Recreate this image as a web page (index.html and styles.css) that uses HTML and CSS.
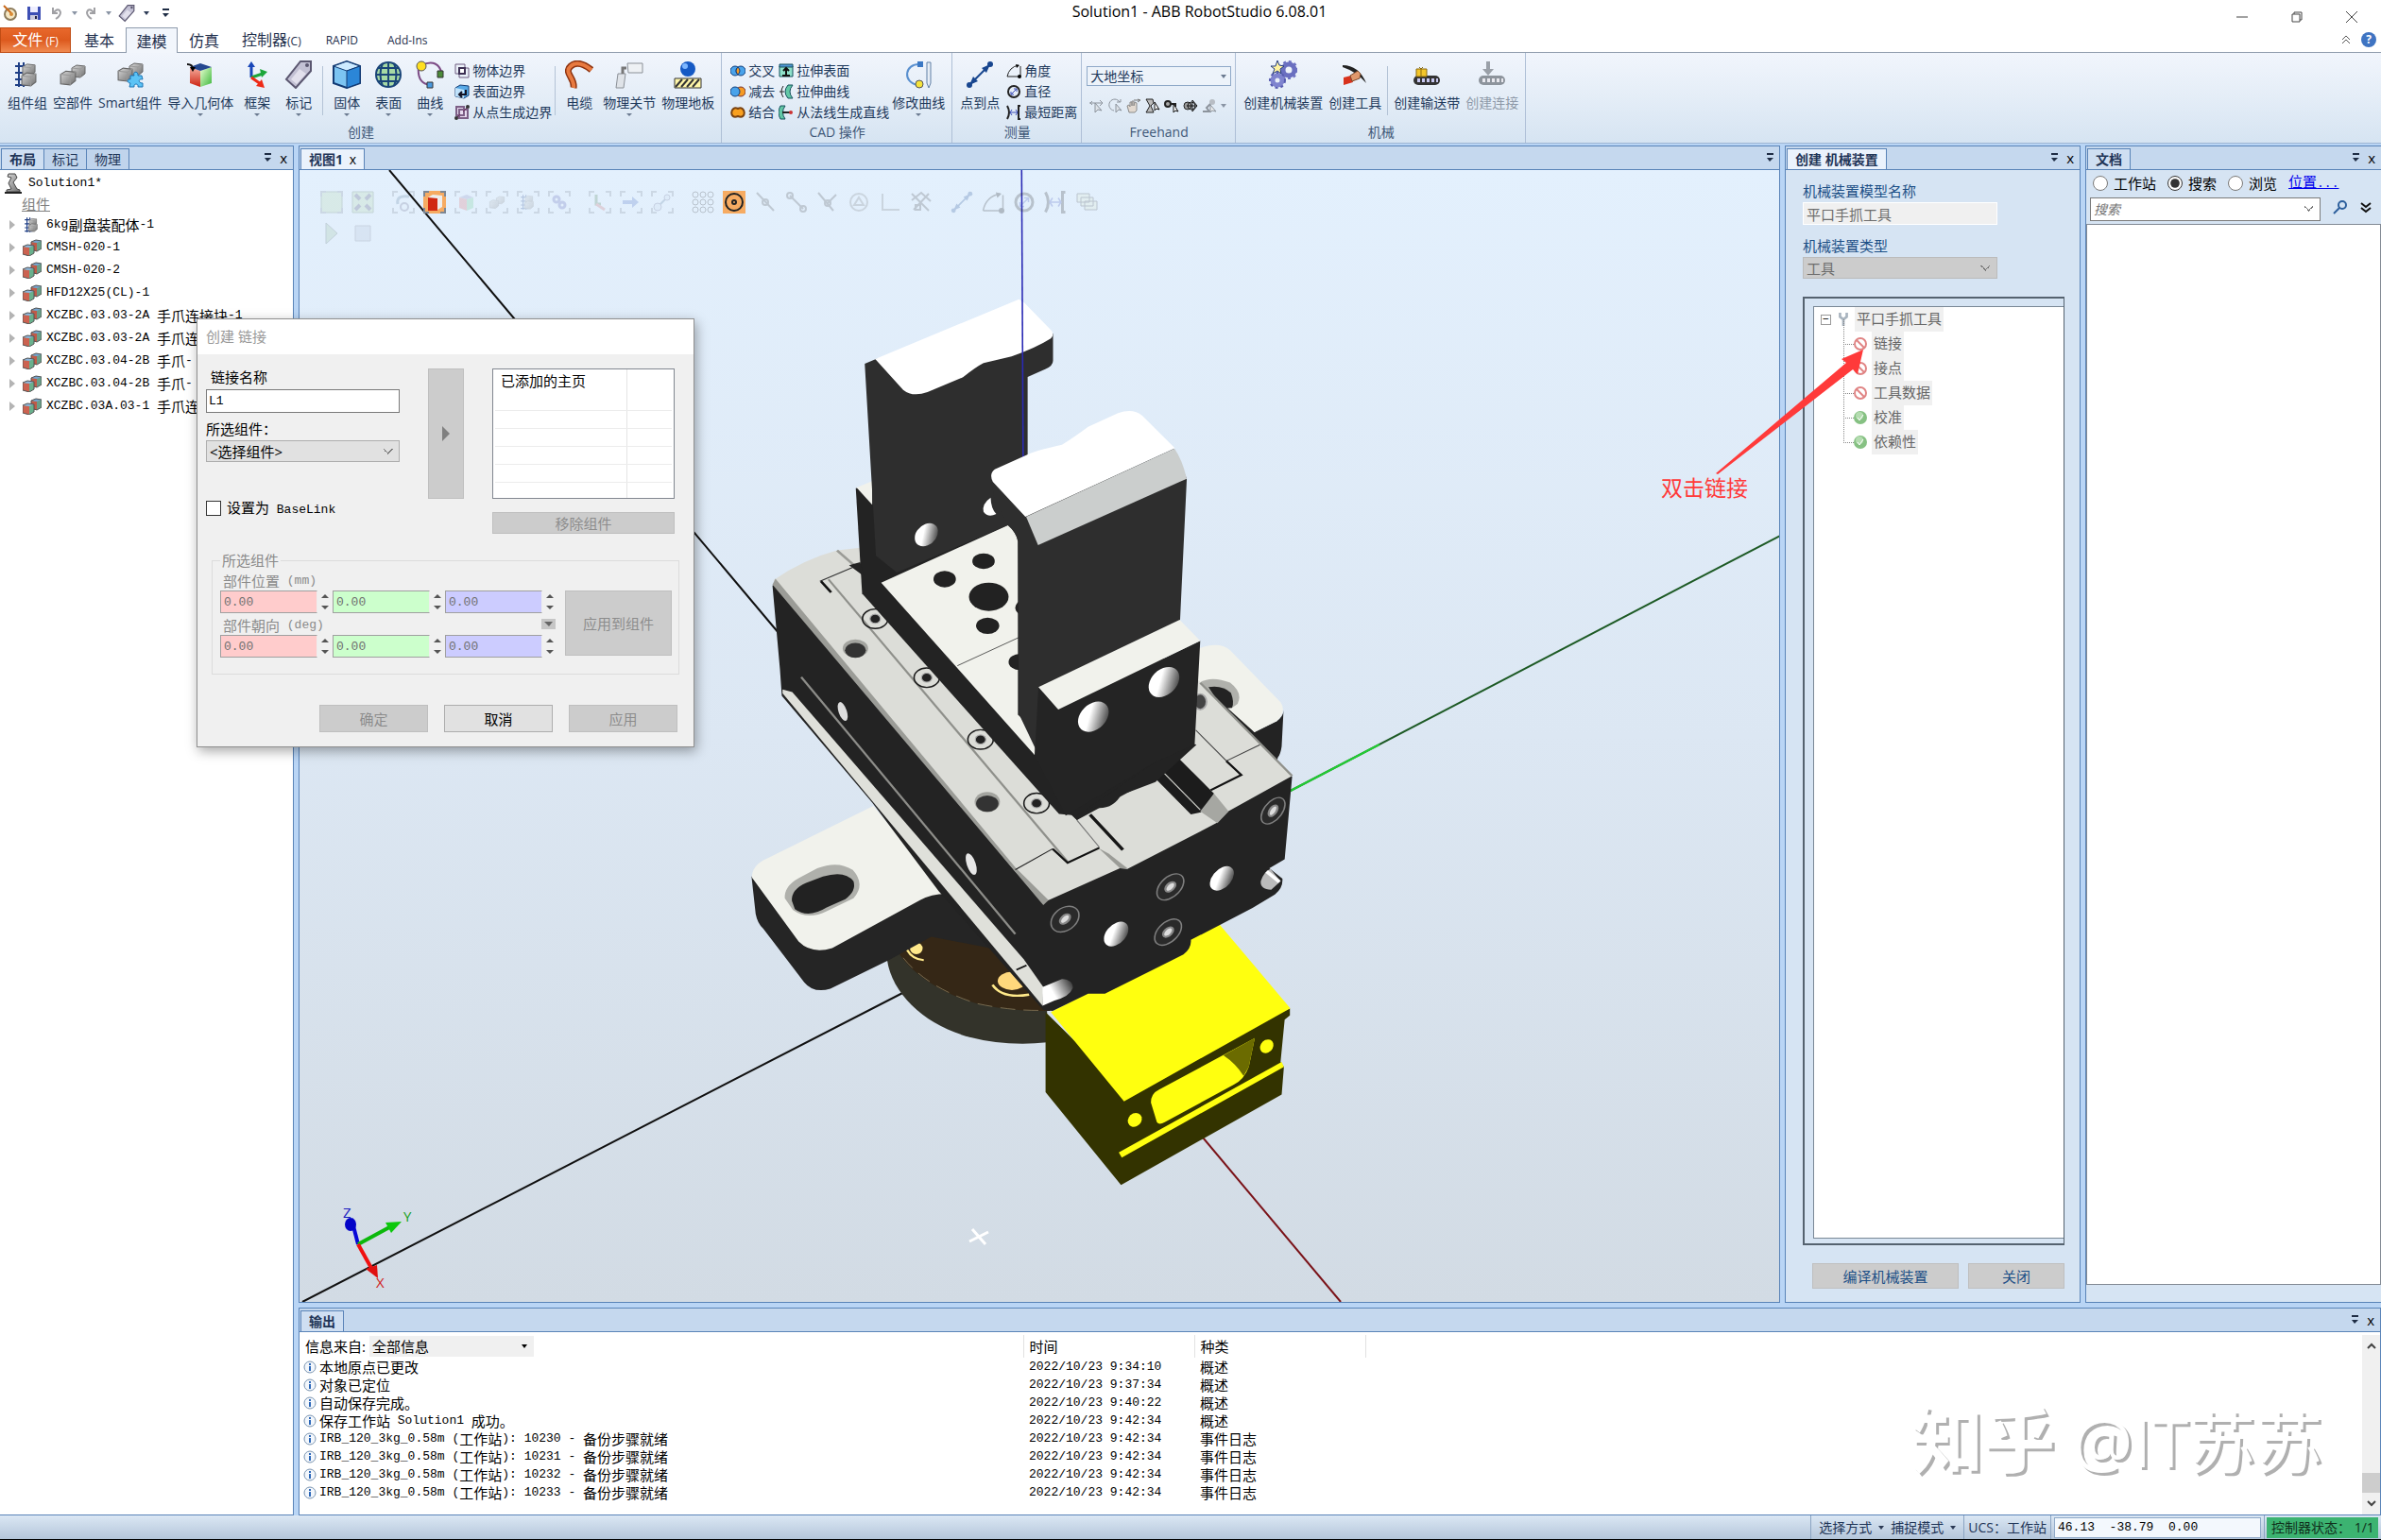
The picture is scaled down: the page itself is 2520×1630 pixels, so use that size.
FILE: index.html
```html
<!DOCTYPE html>
<html lang="zh-CN">
<head>
  <meta charset="UTF-8">
  <meta name="viewport" content="width=device-width, initial-scale=1.0">
  <title>Solution1 - ABB RobotStudio 6.08.01</title>
  <link rel="stylesheet" href="styles.css">
</head>
<body>
  <!-- 共用图标 -->
  <svg class="defs" aria-hidden="true">
    <defs>
      <linearGradient id="gGrey" x1="0" y1="0" x2="1" y2="1"><stop offset="0" stop-color="#d8d8d8"/><stop offset="1" stop-color="#6f6f6f"/></linearGradient>
      <linearGradient id="gRed" x1="0" y1="0" x2="0" y2="1"><stop offset="0" stop-color="#f7b0a0"/><stop offset="1" stop-color="#cc2211"/></linearGradient>
      <linearGradient id="gGreen" x1="0" y1="0" x2="1" y2="1"><stop offset="0" stop-color="#e8ffd0"/><stop offset="1" stop-color="#3db83d"/></linearGradient>
      <linearGradient id="gHole" x1="0" y1="0.7" x2="1" y2="0.2"><stop offset="0.35" stop-color="#fff"/><stop offset="1" stop-color="#3a3a3a"/></linearGradient>
    </defs>
    <symbol id="cube" viewBox="0 0 16 16"><path d="M1 5l5-3 9 1v8l-5 4-9-1z" fill="url(#gGrey)" stroke="#666"/><path d="M1 5l9 1 5-3M10 6v9" fill="none" stroke="#999"/></symbol>
    <symbol id="group" viewBox="0 0 30 30"><path d="M6 2v26M11 2v26M2 6h14M2 13h14M2 20h14M2 26h14" stroke="#1f3f86" stroke-width="2"/><use href="#cube" x="9" y="2" width="15" height="15"/><use href="#cube" x="8" y="11" width="17" height="17"/></symbol>
    <symbol id="part" viewBox="0 0 30 30"><use href="#cube" x="13" y="3" width="16" height="16"/><use href="#cube" x="1" y="9" width="18" height="18"/></symbol>
    <symbol id="smart" viewBox="0 0 30 30"><use href="#cube" x="13" y="1" width="16" height="16"/><use href="#cube" x="1" y="6" width="17" height="17"/><path d="M15 16h4c-2-5 5-5 4 0h4l1 4c-5-1-5 4 0 4v4h-5c1-4-5-4-4 0h-5l1-4c-4 0-4-5 0-4z" fill="#5cc3f5" stroke="#1c74b4"/></symbol>
    <symbol id="import" viewBox="0 0 30 30"><path d="M4 7l11 4v17L4 24z" fill="url(#gRed)"/><path d="M15 11l12-4v17l-12 4z" fill="url(#gGreen)"/><path d="M4 7l11-4 12 4-12 4z" fill="#24478f"/><path d="M1 4q6 0 6 5" fill="none" stroke="#111" stroke-width="2"/><path d="M4 7h6l-3 5z"/></symbol>
    <symbol id="frame" viewBox="0 0 30 30"><path d="M9 18V5" stroke="#1846b8" stroke-width="3"/><path d="M5 7l4-6 4 6z" fill="#1846b8"/><path d="M9 18l12-4" stroke="#1ca63a" stroke-width="3"/><path d="M18 9l8 3-6 6z" fill="#1ca63a"/><path d="M9 18l10 7" stroke="#ee2a16" stroke-width="3"/><path d="M20 20l3 9-9-2z" fill="#ee2a16"/></symbol>
    <symbol id="tag" viewBox="0 0 30 30"><path d="M17 1h11v10L12 29 2 20z" fill="#c3c1d4" stroke="#5b5770" stroke-width="2"/><path d="M16 9l7 5-10 11-6-5z" fill="#e2e0ec"/><circle cx="24" cy="5" r="2" fill="#5b5770"/></symbol>
    <symbol id="solid" viewBox="0 0 30 30"><path d="M1 6l14-5 14 5v18l-14 5-14-5z" fill="#7cc4f2" stroke="#123a74" stroke-width="2"/><path d="M1 6l14 5 14-5-14-5z" fill="#cdeaff" stroke="#123a74"/><path d="M15 11l14-5v18l-14 5z" fill="#2b86d8" stroke="#123a74"/></symbol>
    <symbol id="globe" viewBox="0 0 30 30"><circle cx="15" cy="15" r="13" fill="#a6d9a4" stroke="#1a4578" stroke-width="2"/><path d="M2 15h26M4 8h22M4 22h22M15 2v26M9 3q-5 12 0 24M21 3q5 12 0 24" fill="none" stroke="#1a4578" stroke-width="2"/></symbol>
    <symbol id="curve" viewBox="0 0 30 30"><path d="M3 6q-2 18 12 20M6 5q18-8 22 10" fill="none" stroke="#7d4c86" stroke-width="2"/><circle cx="6" cy="6" r="5" fill="#ffdf20" stroke="#555"/><path d="M23 11h6v7h-6z" fill="#4c8b38" stroke="#333"/><path d="M12 23h6v6h-6z" fill="#4a9ae0" stroke="#333"/></symbol>
    <symbol id="cable" viewBox="0 0 30 30"><path d="M9 29C11 19-2 13 6 6q8-7 22 4" fill="none" stroke="#8f3410" stroke-width="7"/><path d="M9 29C11 19-2 13 6 6q8-7 22 4" fill="none" stroke="#e87a40" stroke-width="4"/></symbol>
    <symbol id="joint" viewBox="0 0 30 30"><path d="M13 3h16v10H14z" fill="#eef1f4" stroke="#8b9097"/><path d="M3 14h8l-2 15H1z" fill="#dfe3e8" stroke="#8b9097"/><path d="M8 14V8h4" fill="none" stroke="#777" stroke-width="3"/></symbol>
    <symbol id="floor" viewBox="0 0 30 30"><circle cx="15" cy="9" r="8" fill="#1559c4"/><circle cx="12" cy="6" r="3" fill="#7cb6ff"/><path d="M1 19h28v10H1z" fill="#fff6a8" stroke="#333"/><path d="M2 28l7-8M8 28l7-8M14 28l7-8M20 28l7-8" stroke="#333" stroke-width="2"/></symbol>
    <symbol id="bound1" viewBox="0 0 16 16"><path d="M1 1h10v10H1zM5 5h10v10H5z" fill="none" stroke="#6c5a7e"/><path d="M5 5h6v6H5z" fill="#fff" stroke="#3c2f52" stroke-width="2"/></symbol>
    <symbol id="bound2" viewBox="0 0 16 16"><path d="M1 4l5-3 9 1v10l-5 3-9-2z" fill="#58a9e6" stroke="#173f75"/><path d="M1 4l9 2v9l-9-2z" fill="#bfe2fb"/><path d="M12 6v5H6M8 8l-3 3 3 3" fill="none" stroke="#112" stroke-width="2"/></symbol>
    <symbol id="bound3" viewBox="0 0 16 16"><path d="M2 2h8v9H2zM5 5h9v9H5z" fill="#e9dcf0" stroke="#7c5f86" stroke-width="2"/><path d="M2 14l4-4M9 7l5-5" stroke="#6b2a58"/><circle cx="2" cy="14" r="2" fill="#333"/><circle cx="14" cy="2" r="2" fill="#333"/></symbol>
    <symbol id="cross" viewBox="0 0 16 12"><circle cx="5" cy="6" r="5" fill="#4aa3ea" stroke="#123f7c"/><circle cx="11" cy="6" r="5" fill="#4aa3ea" stroke="#123f7c"/><path d="M8 2q4 4 0 8-4-4 0-8z" fill="#f59a23" stroke="#123f7c"/></symbol>
    <symbol id="minus" viewBox="0 0 16 12"><circle cx="11" cy="6" r="5" fill="#f59a23" stroke="#733"/><circle cx="5" cy="6" r="5" fill="#4aa3ea" stroke="#123f7c"/></symbol>
    <symbol id="union" viewBox="0 0 16 12"><path d="M8 2c8-4 10 12 0 8-10 4-8-12 0-8z" fill="#f9a01f" stroke="#7a4210" stroke-width="2"/></symbol>
    <symbol id="ext1" viewBox="0 0 16 16"><path d="M1 3h14v11H1z" fill="#8fe0c9" stroke="#14505c"/><path d="M1 1h14v3H1z" fill="#4f95d6" stroke="#14505c"/><path d="M8 13V6M5 8l3-3 3 3M4 13h8" fill="none" stroke="#111" stroke-width="2"/></symbol>
    <symbol id="ext2" viewBox="0 0 16 16"><path d="M10 1h5q-6 7 0 14h-5q-6-7 0-14z" fill="#62c7a5" stroke="#14505c"/><path d="M5 2q-4 6 0 12M1 8h5" fill="none" stroke="#222"/></symbol>
    <symbol id="ext3" viewBox="0 0 16 16"><path d="M2 1h5q-5 7 0 14H2q-4-7 0-14z" fill="#62c7a5" stroke="#14505c"/><path d="M4 8h8" stroke="#222" stroke-width="2"/><circle cx="13" cy="8" r="2" fill="#c33"/></symbol>
    <symbol id="modcurve" viewBox="0 0 30 30"><path d="M17 4C0 3-2 23 14 26" fill="none" stroke="#5a90cf" stroke-width="2"/><path d="M14 1h6v6h-6z" fill="#3b78c4"/><circle cx="16" cy="25" r="4" fill="#f5e33b" stroke="#555"/><path d="M24 2h4v22l-2 5-2-5z" fill="#e7eef6" stroke="#5f7ea5"/></symbol>
    <symbol id="p2p" viewBox="0 0 30 30"><path d="M4 26L26 4" stroke="#18468f" stroke-width="2"/><path d="M4 26l4-9 5 5zM26 4l-9 4 5 5z" fill="#18468f"/><circle cx="4" cy="26" r="3" fill="#18468f"/><circle cx="26" cy="4" r="3" fill="#18468f"/></symbol>
    <symbol id="angle" viewBox="0 0 16 16"><path d="M1 14h14V3M1 14Q3 4 13 2" fill="none" stroke="#222"/><path d="M10 1l4 1-3 3z"/><circle cx="14" cy="14" r="2"/></symbol>
    <symbol id="diam" viewBox="0 0 16 16"><circle cx="8" cy="8" r="6" fill="none" stroke="#222" stroke-width="2"/><path d="M5 11l6-6M11 8V5H8M5 8v3h3" fill="none" stroke="#3a4bb8"/></symbol>
    <symbol id="dist" viewBox="0 0 16 16"><path d="M1 1q4 7 0 14M15 1h-2v14h2" fill="none" stroke="#222" stroke-width="2"/><path d="M4 8h8M6 5L4 8l2 3M10 5l2 3-2 3" fill="none" stroke="#3a4bb8"/></symbol>
    <symbol id="move" viewBox="0 0 16 16"><path d="M1 5h14M12 2l3 3-3 3M4 3L2 5l2 2" fill="none" stroke="#8c939c"/><path d="M7 5v10l3-3 4 1z" fill="#dde2e8" stroke="#8c939c"/></symbol>
    <symbol id="rotate" viewBox="0 0 16 16"><path d="M13 4a6 6 0 1 0-6 9M10 4h4V1" fill="none" stroke="#8c939c"/><path d="M9 6v9l3-3 3 1z" fill="#dde2e8" stroke="#8c939c"/></symbol>
    <symbol id="hand" viewBox="0 0 16 16"><path d="M3 15L1 8l2-1 1 2V4h2v4V3h2v5l1-4 2 1v8l-2 2z" fill="#e2d9d0" stroke="#8a8a8a"/><path d="M8 2h6M12 1l3 1-3 2" fill="none" stroke="#777"/></symbol>
    <symbol id="jog1" viewBox="0 0 16 16"><path d="M1 1h7l1 4-3 3 3 7H1l4-7z" fill="#bbb" stroke="#222"/><path d="M10 4v9l2-2 3 1z" fill="#fff" stroke="#111"/></symbol>
    <symbol id="jog2" viewBox="0 0 16 16"><circle cx="4" cy="6" r="3" fill="#aaa" stroke="#222" stroke-width="2"/><path d="M6 6h6v3" fill="none" stroke="#222" stroke-width="2"/><path d="M10 6v9l2-2 3 1z" fill="#fff" stroke="#111"/></symbol>
    <symbol id="jog3" viewBox="0 0 16 16"><circle cx="5" cy="8" r="4" fill="#999" stroke="#222"/><circle cx="9" cy="8" r="4" fill="none" stroke="#222"/><path d="M10 2l5 6-5 6zM4 8h10" fill="none" stroke="#111"/></symbol>
    <symbol id="jog4" viewBox="0 0 16 16"><path d="M1 14h7L5 10l5-5" fill="none" stroke="#8c939c" stroke-width="2"/><circle cx="11" cy="4" r="3" fill="#b8bdc4"/><path d="M9 7v8l2-2 4 1z" fill="#eee" stroke="#8c939c"/></symbol>
    <symbol id="mech" viewBox="0 0 30 30"><circle cx="21" cy="10" r="6" fill="none" stroke="#6a6fc0" stroke-width="5"/><circle cx="21" cy="10" r="9" fill="none" stroke="#6a6fc0" stroke-width="2" stroke-dasharray="3 3"/><circle cx="9" cy="21" r="5" fill="none" stroke="#7f84cf" stroke-width="5"/><circle cx="9" cy="21" r="8" fill="none" stroke="#565bb0" stroke-width="2" stroke-dasharray="3 3"/><path d="M9 0l2 5 5 1-4 3 1 5-4-3-5 3 2-5-4-3h5z" fill="#fff3a0" stroke="#223a80"/></symbol>
    <symbol id="pick" viewBox="0 0 30 30"><path d="M2 5q17 0 25 19Q17 12 2 7z" fill="#222"/><path d="M3 18l8-2 2 7-10 3z" fill="#d8321c"/><path d="M10 16l8-5 3 3-1 5-8 3z" fill="#e0986c" stroke="#7a4a2c"/></symbol>
    <symbol id="conv" viewBox="0 0 30 30"><rect x="1" y="16" width="28" height="10" rx="5" fill="#333"/><path d="M5 21h22" stroke="#c8c8f0" stroke-width="4" stroke-dasharray="3 2"/><path d="M4 9h11v8H4z" fill="#f4c62a" stroke="#8b6a10"/><path d="M9 9v8M7 7l2 2 2-2" fill="none" stroke="#8b6a10"/></symbol>
    <symbol id="conn" viewBox="0 0 30 30"><rect x="1" y="16" width="28" height="10" rx="5" fill="#8d949c"/><path d="M5 21h22" stroke="#e8e8ee" stroke-width="4" stroke-dasharray="3 2"/><path d="M9 1h4v8h4l-6 7-6-7h4z" fill="#9aa0a8"/></symbol>
    <symbol id="robot" viewBox="0 0 18 22"><path d="M2 20h14v-2l-3-1-4-7 4-5-2-4H4L3 4l4 1-3 6 3 6-5 1z" fill="url(#gGrey)" stroke="#444"/><path d="M0 21h18" stroke="#222" stroke-width="2"/></symbol>
    <symbol id="comp" viewBox="0 0 20 18"><path d="M9 3l5-2 6 1v8l-5 3-6-1z" fill="#6a9f88"/><path d="M9 3l6 1v9l-6-1z" fill="#c05a48"/><path d="M9 3l5-2 6 1-5 2z" fill="#77a3d0"/><path d="M0 8l5-2 7 1v8l-5 3-7-2z" fill="#69b08c"/><path d="M0 8l7 1v9l-7-2z" fill="#cc6250"/><path d="M0 8l5-2 7 1-5 2z" fill="#8fb4dc"/><path d="M0 8l5-2 7 1v8l-5 3-7-2zM12 12l3 1 5-3V2l-6-1-5 2v3" fill="none" stroke="#555"/></symbol>
    <symbol id="pin" viewBox="0 0 8 10"><path d="M1 1h7" stroke="#1e2c44" stroke-width="2"/><path d="M1 5h7L4 9z" fill="#1e2c44"/></symbol>
    <symbol id="no" viewBox="0 0 16 16"><circle cx="8" cy="8" r="6" fill="#fff" stroke="#e08484" stroke-width="2"/><path d="M4 4l8 8" stroke="#e08484" stroke-width="2"/></symbol>
    <symbol id="ok" viewBox="0 0 16 16"><circle cx="8" cy="8" r="7" fill="#86c183"/><circle cx="7" cy="6" r="4" fill="#b4dcb0"/><path d="M5 8l2 3 4-6" fill="none" stroke="#fff"/></symbol>
    <symbol id="info" viewBox="0 0 14 14"><circle cx="7" cy="7" r="6" fill="#f3f7fc" stroke="#7a94b0"/><path d="M7 6v5M7 3v2" stroke="#2a66b8" stroke-width="2"/></symbol>
    <symbol id="corners" viewBox="0 0 24 24"><path d="M1 6V1h5M18 1h5v5M23 18v5h-5M6 23H1v-5" fill="none" stroke="#7d8794" stroke-width="2"/></symbol>
  </svg>

  <header class="titlebar">
    <div class="quick">
      <svg width="16" height="20" viewBox="0 0 16 20"><circle cx="8" cy="11" r="6" fill="#f4e7c4" stroke="#8d7c5c" stroke-width="2"/><path d="M1 2l8 8" stroke="#c8691b" stroke-width="2"/><circle cx="9" cy="11" r="2" fill="#d88b35"/></svg>
      <button aria-label="保存"><svg width="16" height="16" viewBox="0 0 16 16"><path d="M1 1h14v14H1z" fill="#3d4fb4"/><path d="M4 1h8v6H4z" fill="#eef"/><path d="M4 10h8v5H4z" fill="#ccd"/><path d="M9 11h2v3H9z" fill="#224"/></svg></button>
      <button aria-label="撤销"><svg width="14" height="16" viewBox="0 0 14 16"><path d="M3 2v6h5M3 8q6-7 8-1 0 4-5 7" fill="none" stroke="#a0a0a4" stroke-width="2"/></svg></button>
      <i class="tri"></i>
      <button aria-label="恢复"><svg width="14" height="16" viewBox="0 0 14 16"><path d="M11 2v6H6M11 8Q5 1 3 7q0 4 5 7" fill="none" stroke="#a0a0a4" stroke-width="2"/></svg></button>
      <i class="tri"></i>
      <button aria-label="标记"><svg width="18" height="20"><use href="#tag"/></svg></button>
      <i class="tri dark"></i>
      <svg class="more" width="8" height="10"><use href="#pin"/></svg>
    </div>
    <h1>Solution1 - ABB RobotStudio 6.08.01</h1>
    <div class="winbtns">
      <button aria-label="最小化"><svg width="14" height="14"><path d="M1 7h12" stroke="#444"/></svg></button>
      <button aria-label="还原"><svg width="14" height="14" fill="none" stroke="#444"><path d="M2 4h8v8H2zM4 4V2h8v8h-2"/></svg></button>
      <button aria-label="关闭"><svg width="14" height="14" stroke="#444"><path d="M1 1l12 12M13 1L1 13"/></svg></button>
    </div>
  </header>

  <nav class="tabs">
    <button class="tab file">文件<small> (F)</small></button>
    <button class="tab">基本</button>
    <button class="tab active">建模</button>
    <button class="tab">仿真</button>
    <button class="tab">控制器<small>(C)</small></button>
    <button class="tab latin">RAPID</button>
    <button class="tab latin">Add-Ins</button>
    <div class="help">
      <svg width="10" height="10" viewBox="0 0 10 10"><path d="M1 5l4-4 4 4M1 9l4-4 4 4" fill="none" stroke="#555"/></svg>
      <button aria-label="帮助">?</button>
    </div>
  </nav>

  <section class="ribbon">
    <div class="rgroup">
      <div class="tools">
        <button class="big"><svg><use href="#group"/></svg>组件组</button>
        <button class="big"><svg><use href="#part"/></svg>空部件</button>
        <button class="big"><svg><use href="#smart"/></svg>Smart组件</button>
        <button class="big drop"><svg><use href="#import"/></svg>导入几何体</button>
        <button class="big drop"><svg><use href="#frame"/></svg>框架</button>
        <button class="big drop"><svg><use href="#tag"/></svg>标记</button>
        <span class="sep"></span>
        <button class="big drop"><svg><use href="#solid"/></svg>固体</button>
        <button class="big drop"><svg><use href="#globe"/></svg>表面</button>
        <button class="big drop"><svg><use href="#curve"/></svg>曲线</button>
        <div class="smalls">
          <button><svg><use href="#bound1"/></svg>物体边界</button>
          <button><svg><use href="#bound2"/></svg>表面边界</button>
          <button><svg><use href="#bound3"/></svg>从点生成边界</button>
        </div>
        <span class="sep"></span>
        <button class="big"><svg><use href="#cable"/></svg>电缆</button>
        <button class="big drop"><svg><use href="#joint"/></svg>物理关节</button>
        <button class="big"><svg><use href="#floor"/></svg>物理地板</button>
      </div>
      <p>创建</p>
    </div>
    <div class="rgroup">
      <div class="tools">
        <div class="smalls">
          <button><svg><use href="#cross"/></svg>交叉</button>
          <button><svg><use href="#minus"/></svg>减去</button>
          <button><svg><use href="#union"/></svg>结合</button>
        </div>
        <div class="smalls">
          <button><svg><use href="#ext1"/></svg>拉伸表面</button>
          <button><svg><use href="#ext2"/></svg>拉伸曲线</button>
          <button><svg><use href="#ext3"/></svg>从法线生成直线</button>
        </div>
        <button class="big drop"><svg><use href="#modcurve"/></svg>修改曲线</button>
      </div>
      <p>CAD 操作</p>
    </div>
    <div class="rgroup">
      <div class="tools">
        <button class="big"><svg><use href="#p2p"/></svg>点到点</button>
        <div class="smalls">
          <button><svg><use href="#angle"/></svg>角度</button>
          <button><svg><use href="#diam"/></svg>直径</button>
          <button><svg><use href="#dist"/></svg>最短距离</button>
        </div>
      </div>
      <p>测量</p>
    </div>
    <div class="rgroup">
      <div class="freehand">
        <select aria-label="坐标系"><option>大地坐标</option></select>
        <div class="jogs">
          <button aria-label="移动"><svg><use href="#move"/></svg></button>
          <button aria-label="旋转"><svg><use href="#rotate"/></svg></button>
          <button aria-label="拖曳"><svg><use href="#hand"/></svg></button>
          <button aria-label="手动关节"><svg><use href="#jog1"/></svg></button>
          <button aria-label="手动线性"><svg><use href="#jog2"/></svg></button>
          <button aria-label="手动重定位"><svg><use href="#jog3"/></svg></button>
          <button aria-label="多个机器人"><svg><use href="#jog4"/></svg></button>
          <i class="tri"></i>
        </div>
      </div>
      <p>Freehand</p>
    </div>
    <div class="rgroup">
      <div class="tools">
        <button class="big"><svg><use href="#mech"/></svg>创建机械装置</button>
        <button class="big"><svg><use href="#pick"/></svg>创建工具</button>
        <span class="sep"></span>
        <button class="big"><svg><use href="#conv"/></svg>创建输送带</button>
        <button class="big off" disabled><svg><use href="#conn"/></svg>创建连接</button>
      </div>
      <p>机械</p>
    </div>
  </section>

  <main class="workspace">
    <aside class="panel left">
      <div class="phead">
        <button class="ptab on">布局</button><button class="ptab">标记</button><button class="ptab">物理</button>
        <span class="pctl"><svg width="8" height="10"><use href="#pin"/></svg><button aria-label="关闭">x</button></span>
      </div>
      <ul class="tree">
        <li class="root"><svg><use href="#robot"/></svg><span class="mono">Solution1*</span></li>
        <li class="cat">组件</li>
        <li><i></i><svg><use href="#group"/></svg><span class="mono">6kg</span>副盘装配体<span class="mono">-1</span></li>
        <li><i></i><svg><use href="#comp"/></svg><span class="mono">CMSH-020-1</span></li>
        <li><i></i><svg><use href="#comp"/></svg><span class="mono">CMSH-020-2</span></li>
        <li><i></i><svg><use href="#comp"/></svg><span class="mono">HFD12X25(CL)-1</span></li>
        <li><i></i><svg><use href="#comp"/></svg><span class="mono">XCZBC.03.03-2A </span>手爪连接块<span class="mono">-1</span></li>
        <li><i></i><svg><use href="#comp"/></svg><span class="mono">XCZBC.03.03-2A </span>手爪连</li>
        <li><i></i><svg><use href="#comp"/></svg><span class="mono">XCZBC.03.04-2B </span>手爪<span class="mono">-</span></li>
        <li><i></i><svg><use href="#comp"/></svg><span class="mono">XCZBC.03.04-2B </span>手爪<span class="mono">-</span></li>
        <li><i></i><svg><use href="#comp"/></svg><span class="mono">XCZBC.03A.03-1 </span>手爪连</li>
      </ul>
    </aside>

    <section class="panel view">
      <div class="phead">
        <button class="ptab on light">视图1 <b>x</b></button>
        <span class="pctl"><svg width="8" height="10"><use href="#pin"/></svg></span>
      </div>
      <div class="canvas">
        <svg class="scene" viewBox="317 180 1566 1198" preserveAspectRatio="xMidYMid slice" aria-label="夹爪三维视图">
          <!-- 坐标轴线 -->
          <path d="M412 180L830 677M320 1378L965 1046" stroke="#111" stroke-width="2" fill="none"/>
          <path d="M1360 840L1884 567" stroke="#1d5a25" stroke-width="2"/>
          <path d="M1360 840L1460 788" stroke="#22cc33" stroke-width="2"/>
          <path d="M1268 1198L1419 1378" stroke="#7a1218" stroke-width="2"/>

          <!-- 右侧安装耳 -->
          <g transform="translate(780 300) scale(.3954 .3333)">
            <path d="M1220 1200L1385 1425L1445 1390Q1463 1375 1463 1355L1458 1470Q1455 1495 1448 1505L1440 1540L1300 1500Z" fill="#232323"/>
            <path d="M1235 1160Q1290 1135 1320 1165L1455 1330Q1472 1360 1445 1390L1385 1425L1230 1260Z" fill="#f1f2ec"/>
            <path d="M1238 1268Q1270 1245 1320 1268Q1355 1300 1340 1335L1325 1348L1230 1300Z" fill="#b0b1ac"/>
            <path d="M1262 1282Q1300 1275 1322 1300Q1332 1330 1325 1348L1300 1350Z" fill="#232323"/>
          </g>

          <g transform="translate(780 740) scale(.3954 .3444)">
            <!-- 法兰盘 -->
            <path d="M400 780C405 900 500 1000 620 1038Q720 1068 830 1055V880L560 690Z" fill="#33332a"/>
            <path d="M432 778C470 850 560 910 640 935Q740 962 838 958V880L640 715L540 715Z" fill="#352716"/>
            <path d="M445 795C490 860 560 905 640 935Q740 960 828 956" fill="none" stroke="#8d8060" stroke-width="2" stroke-dasharray="40 22"/>
            <ellipse cx="480" cy="766" rx="17" ry="18" fill="#ffe98a"/>
            <path d="M455 770Q470 800 500 802" fill="none" stroke="#ffe98a" stroke-width="6"/>
            <ellipse cx="736" cy="866" rx="38" ry="28" fill="#ffd87c"/>
            <path d="M684 878Q710 922 782 908" fill="none" stroke="#ffe98a" stroke-width="7"/>
            <!-- 左侧安装耳 -->
            <path d="M39 545L50 660Q55 690 70 705L180 870Q205 905 250 890L410 800L520 730L700 770L640 600L555 590Z" fill="#252525"/>
            <path d="M40 548Q40 510 80 490L365 328L560 598Q520 598 490 618L255 765Q200 785 165 745Z" fill="#f1f2ec"/>
            <path d="M128 612Q126 575 165 550L215 520Q270 495 310 525Q345 570 312 612L240 652Q190 680 150 648Z" fill="#afb0ab"/>
            <path d="M147 620Q145 585 185 565L230 545Q290 525 312 560Q320 590 290 615L240 640Q190 675 155 645Z" fill="#222"/>
            <!-- 黄色底座 -->
            <path d="M826 962L1036 1200L1480 950V972L1466 985L1455 1115L1464 1130L1458 1215L1028 1493L826 1208Z" fill="#333300"/>
            <path d="M840 962L945 900L1290 690L1481 950L1036 1236Z" fill="#ffff0f"/>
            <path d="M1022 1393L1458 1115L1464 1130L1030 1409Z" fill="#ffff0f"/>
            <path d="M1108 1240Q1108 1212 1130 1200L1386 1042L1370 1130Q1358 1168 1330 1185L1145 1300Q1130 1310 1124 1300Z" fill="#ffff0f"/>
            <path d="M1302 1095L1386 1042L1370 1130L1356 1158Q1335 1120 1302 1095Z" fill="#6b6b00"/>
            <ellipse cx="1065" cy="1293" rx="18" ry="22" transform="rotate(25 1065 1293)" fill="#ffff0f"/>
            <ellipse cx="1418" cy="1067" rx="17" ry="22" transform="rotate(25 1418 1067)" fill="#ffff0f"/>

            <!-- 气缸本体 -->
            <path d="M95-349L115-92L120-10L362 318L540 590L820 955L845 958L940 905L985 905L1195 785Q1217 765 1215 740L1380 642L1440 600Q1462 580 1460 552L1425 520L1466 492L1486 238L1228-58L780-250L268-440Z" fill="#232323"/>
            <path d="M122-30L148-22L768 800L820 885L818 942L122-18Z" fill="#dfe0da"/>
            <path d="M818 885L870 860Q900 862 899 888Q890 915 850 926L818 942Z" fill="url(#gHole)"/>
            <path d="M748 832L775 818" stroke="#111" stroke-width="5"/>
            <path d="M172-68L745 722" stroke="#8d8d89" stroke-width="6"/>
            <ellipse cx="283" cy="38" rx="11" ry="30" transform="rotate(-16 283 38)" fill="#ddd"/>
            <ellipse cx="627" cy="507" rx="12" ry="34" transform="rotate(-16 627 507)" fill="#e6e6e6"/>
            <path d="M98-366Q180-430 268-457L330-465L345-320L885 345L910 372L945 350L1130 235L1235-58L1486 236L1315 345L1285 380L1045 522L1025 520L830 620L745 530Z" fill="#dcddd8"/>
            <path d="M95-352L103-370L746 518L834 618L820 633Z" fill="#9b9c97"/>
            <path d="M268-457L310-415L330-400" stroke="#9b9c97" stroke-width="7" fill="none"/>
            <path d="M245-368L885 500" stroke="#8f908b" stroke-width="6"/>
            <path d="M222-362L310-405" stroke="#333" stroke-width="3"/>
            <path d="M225-362L252-328" stroke="#111" stroke-width="7"/>
            <path d="M745 524L845 460" stroke="#222" stroke-width="3"/>
            <path d="M845 460L885 503L970 457" stroke="#111" stroke-width="6" fill="none"/>
            <path d="M968 458L1025 520L1045 520L995 475Z" fill="#9b9c97"/>
            <path d="M910 372L970 455" stroke="#777" stroke-width="3"/>
            <path d="M945 355L1033 463" stroke="#161616" stroke-width="9"/>
            <path d="M1118 195L1172 170L1277 290L1242 348L1215 354L1125 250Z" fill="#1c1c1c"/>
            <path d="M1118 198L1240 340" stroke="#cfd0ca" stroke-width="3"/>
            <path d="M1277 290L1316 345L1286 381L1240 345Z" fill="#a6a7a2"/>
            <path d="M1228 95L1310 190L1400 140" stroke="#444" stroke-width="3" fill="none"/>
            <path d="M1310 190L1350 233L1268 280" stroke="#111" stroke-width="6" fill="none"/>
            <path d="M1240-50L1486 236" stroke="#8f908b" stroke-width="6"/>
            <ellipse cx="1240" cy="8" rx="17" ry="24" fill="#444" stroke="#aaa" stroke-width="5"/>
            <path d="M860 345L885 342L910 372L950 332Q1005 345 1030 290L1050 285L1120 255L1230 140L1100 100L800 180Z" fill="#232323"/>
            <g fill="none" stroke="#1a1a1a" stroke-width="4">
              <ellipse cx="370" cy="-247" rx="34" ry="30"/><ellipse cx="508" cy="-66" rx="34" ry="30"/>
              <ellipse cx="652" cy="124" rx="34" ry="30"/><ellipse cx="802" cy="320" rx="34" ry="31"/>
            </g>
            <g fill="#222" stroke="#aaa" stroke-width="3">
              <circle cx="370" cy="-247" r="14"/><circle cx="508" cy="-66" r="14"/>
              <circle cx="652" cy="124" r="14"/><circle cx="802" cy="320" r="14"/>
            </g>
            <g fill="#a3a49f"><ellipse cx="317" cy="-156" rx="34" ry="28"/><ellipse cx="670" cy="316" rx="34" ry="31"/></g>
            <g fill="#333"><ellipse cx="317" cy="-150" rx="28" ry="23"/><ellipse cx="670" cy="321" rx="30" ry="25"/></g>
            <g fill="#2a2a2a" stroke="#7f7f7f" stroke-width="4">
              <ellipse cx="878" cy="676" rx="32" ry="44" transform="rotate(40 878 676)"/>
              <ellipse cx="1160" cy="577" rx="28" ry="46" transform="rotate(38 1160 577)"/>
              <ellipse cx="1154" cy="716" rx="28" ry="46" transform="rotate(38 1154 716)"/>
              <ellipse cx="1435" cy="343" rx="25" ry="45" transform="rotate(32 1435 343)"/>
            </g>
            <g fill="#ddd" stroke="#888" stroke-width="6">
              <ellipse cx="878" cy="676" rx="10" ry="17" transform="rotate(40 878 676)"/>
              <ellipse cx="1160" cy="577" rx="10" ry="17" transform="rotate(40 1160 577)"/>
              <ellipse cx="1154" cy="716" rx="10" ry="17" transform="rotate(40 1154 716)"/>
              <ellipse cx="1435" cy="343" rx="9" ry="18" transform="rotate(30 1435 343)"/>
            </g>
            <ellipse cx="1015" cy="722" rx="27" ry="42" transform="rotate(35 1015 722)" fill="url(#gHole)"/>
            <ellipse cx="1298" cy="551" rx="26" ry="42" transform="rotate(35 1298 551)" fill="url(#gHole)"/>
            <path d="M1402 560Q1410 530 1428 522L1455 560L1430 586Q1400 585 1402 560Z" fill="#bbb"/>
            <path d="M1418 530L1452 562" stroke="#fff" stroke-width="10"/>
          </g>

          <g transform="translate(780 300) scale(.3954 .3333)">
            <!-- 滑块 -->
            <path d="M318 650L335 985L862 1685L910 1690L1120 1520L1150 1100L778 600L365 640Z" fill="#232323"/>
            <path d="M300 895L330 885L340 930Z" fill="#232323"/>
            <path d="M320 648L362 628V703Z" fill="#f1f2ec"/>
            <path d="M386 950L725 768Q748 790 752 820V1370L800 1420L797 1498Z" fill="#f1f2ec"/>
            <g fill="#222">
              <ellipse cx="660" cy="882" rx="30" ry="25"/><ellipse cx="556" cy="939" rx="30" ry="26"/>
              <ellipse cx="674" cy="995" rx="53" ry="45"/><ellipse cx="671" cy="1087" rx="31" ry="26"/>
              <ellipse cx="758" cy="1202" rx="31" ry="26"/><ellipse cx="775" cy="1030" rx="30" ry="26"/>
            </g>
            <path d="M590 1214L755 1124" stroke="#222" stroke-width="2"/>
            <!-- 后手指 -->
            <path d="M342 255L372 240L780 100L846 160V245Q846 262 825 272L778 297V560L740 760L428 918L372 865Z" fill="#2e2e2e"/>
            <path d="M370 240L755 50L770 62L842 150Q850 165 840 175Q800 205 735 232L660 253Q640 265 605 298L510 345Q470 362 445 338Z" fill="#fff"/>
            <ellipse cx="507" cy="798" rx="28" ry="39" transform="rotate(30 507 798)" fill="url(#gHole)"/>
            <path d="M679 680Q655 700 660 725Q672 745 694 732Q680 715 679 680Z" fill="#fff"/>
            <path d="M762-360L766 560" stroke="#2a2ab4" stroke-width="4"/>
            <!-- 前手指 -->
            <path d="M680 620L770 740L1170 524L1204 620L1186 1070L1000 1300H808V1500L755 1368L752 815Q745 790 727 768L690 690Z" fill="#2e2e2e"/>
            <path d="M772 741L685 630Q674 605 690 590L780 542Q800 530 870 512Q900 490 940 455L1020 412Q1060 395 1085 420L1172 523Z" fill="#fff"/>
            <path d="M774 741L1171 524Q1192 560 1204 620L806 831Z" fill="#cbcecd"/>
            <!-- 前手指连接块 -->
            <path d="M807 1282L860 1352L1240 1135L1225 1465L1120 1520L880 1690L797 1500Z" fill="#242424"/>
            <path d="M807 1282L1185 1068L1240 1135L860 1353Z" fill="#f1f2ec"/>
            <ellipse cx="954" cy="1376" rx="36" ry="52" transform="rotate(32 954 1376)" fill="url(#gHole)"/>
            <ellipse cx="1143" cy="1266" rx="36" ry="52" transform="rotate(32 1143 1266)" fill="url(#gHole)"/>
          </g>

          <!-- 坐标系指示 -->
          <g stroke-width="4" fill="none">
            <path d="M379 1317L372 1290" stroke="#0808d8"/><path d="M379 1317L414 1298" stroke="#0cb80c"/><path d="M379 1317L394 1344" stroke="#f01010"/>
          </g>
          <ellipse cx="371" cy="1296" rx="6" ry="7" fill="#0404c8"/>
          <path d="M408 1294L425 1293L414 1305Z" fill="#0cc80c"/>
          <path d="M387 1343L399 1339L400 1353Z" fill="#e01010"/>
          <g class="axis"><text x="363" y="1289" fill="#2020c0">Z</text><text x="427" y="1293" fill="#18a018">Y</text><text x="398" y="1363" fill="#d02020">X</text></g>
          <path d="M1029 1301L1043 1317M1046 1304L1026 1314" stroke="#fff" stroke-width="3"/>
        </svg>
        <div class="vbar">
          <div>
            <button aria-label="查看全部"><svg><path d="M1 1h22v22H1z" fill="#b5d6a0" stroke="#5a7a58"/><use href="#corners"/></svg></button>
            <button aria-label="查看中心"><svg><path d="M1 1h22v22H1z" fill="#b5d6a0" stroke="#5a7a58"/><path d="M4 4l5 5M20 4l-5 5M4 20l5-5M20 20l-5-5" stroke="#446" stroke-width="4"/></svg></button>
          </div>
          <div>
            <button aria-label="选择曲线"><svg><use href="#corners"/><path d="M18 6q-14-2-12 8" fill="none" stroke="#579" stroke-width="3"/><circle cx="13" cy="17" r="4" fill="none" stroke="#668" stroke-width="2"/></svg></button>
            <button class="hot" aria-label="选择表面"><svg><use href="#corners"/><path d="M5 7l5-3 10 1v12l-5 3z" fill="#eee"/><path d="M5 7l10 1v13H5z" fill="#d02812"/></svg></button>
            <button aria-label="选择物体"><svg><use href="#corners"/><path d="M5 7l8-3 7 3-7 2z" fill="#88b"/><path d="M5 7l8 2v12l-8-3z" fill="#d66"/><path d="M13 9l7-2v11l-7 3z" fill="#6c8"/></svg></button>
            <button aria-label="选择部件"><svg><use href="#corners"/><use href="#part" x="3" y="3" width="18" height="18"/></svg></button>
            <button aria-label="选择组"><svg><use href="#corners"/><use href="#group" x="3" y="3" width="18" height="18"/></svg></button>
            <button aria-label="选择机械装置"><svg><use href="#corners"/><g fill="none" stroke="#565bb0" stroke-width="3"><circle cx="9" cy="9" r="3"/><circle cx="15" cy="15" r="3"/></g></svg></button>
          </div>
          <div>
            <button aria-label="选择框架"><svg><use href="#corners"/><path d="M8 4v10h5" fill="none" stroke="#474" stroke-width="3"/><path d="M8 14l9 6" stroke="#c66" stroke-width="3"/></svg></button>
            <button aria-label="选择目标点"><svg><use href="#corners"/><path d="M3 10h10V6l7 6-7 6v-4H3z" fill="#4468c0"/></svg></button>
            <button aria-label="选择路径"><svg><use href="#corners"/><path d="M6 18L18 6" stroke="#579" stroke-width="2"/><circle cx="7" cy="17" r="4" fill="#cde" stroke="#668"/><circle cx="17" cy="7" r="3" fill="#cde" stroke="#668"/></svg></button>
          </div>
          <div>
            <button aria-label="捕捉对象"><svg fill="none" stroke="#222"><circle cx="4" cy="4" r="3"/><circle cx="12" cy="4" r="3"/><circle cx="20" cy="4" r="3"/><circle cx="4" cy="12" r="3"/><circle cx="12" cy="12" r="3"/><circle cx="20" cy="12" r="3"/><circle cx="4" cy="20" r="3"/><circle cx="12" cy="20" r="3"/><circle cx="20" cy="20" r="3"/></svg></button>
            <button class="hot" aria-label="捕捉中心"><svg fill="none" stroke="#222" stroke-width="2"><circle cx="12" cy="12" r="9"/><circle cx="12" cy="12" r="2"/></svg></button>
            <button aria-label="捕捉中点"><svg fill="none" stroke="#444" stroke-width="2"><path d="M3 2l18 19"/><circle cx="12" cy="12" r="3"/></svg></button>
            <button aria-label="捕捉末端"><svg fill="none" stroke="#444" stroke-width="2"><path d="M5 5l14 14"/><circle cx="5" cy="5" r="3"/><circle cx="19" cy="19" r="3"/></svg></button>
            <button aria-label="捕捉边缘"><svg fill="none" stroke="#444" stroke-width="2"><path d="M2 2l16 19M12 13l9-9"/><circle cx="12" cy="13" r="3"/></svg></button>
            <button aria-label="捕捉重心"><svg fill="none" stroke="#777" stroke-width="2"><circle cx="12" cy="12" r="9"/><path d="M12 7l5 8H7z"/></svg></button>
            <button aria-label="捕捉本地原点"><svg fill="none" stroke="#777" stroke-width="2"><path d="M4 3v17h18"/></svg></button>
            <button aria-label="捕捉网格"><svg fill="none" stroke="#444" stroke-width="2"><path d="M2 3l18 18M20 3L4 20M2 10L12 2l10 9"/><path d="M6 15h5v5H6z"/></svg></button>
          </div>
          <div>
            <button aria-label="测量点到点"><svg><use href="#p2p"/></svg></button>
            <button aria-label="测量角度"><svg><use href="#angle"/></svg></button>
            <button aria-label="测量直径"><svg><use href="#diam"/></svg></button>
            <button aria-label="测量最短距离"><svg><use href="#dist"/></svg></button>
            <button aria-label="保持测量"><svg fill="#dfe8c8" stroke="#333"><path d="M2 3h13v9H2zM6 7h13v9H6zM10 11h13v9H10z"/></svg></button>
          </div>
        </div>
        <div class="vbar second">
          <div>
            <button aria-label="播放"><svg><path d="M6 1l12 11L6 23z" fill="#98c098" stroke="#566"/></svg></button>
            <button aria-label="停止"><svg><path d="M4 4h16v16H4z" fill="#b4c0d4" stroke="#778"/></svg></button>
          </div>
        </div>
      </div>
    </section>

    <section class="panel mechpanel">
      <div class="phead">
        <button class="ptab on light">创建 机械装置</button>
        <span class="pctl"><svg width="8" height="10"><use href="#pin"/></svg><button aria-label="关闭">x</button></span>
      </div>
      <form class="mechform">
        <label for="mname">机械装置模型名称</label>
        <input id="mname" type="text" value="平口手抓工具" disabled>
        <label for="mtype">机械装置类型</label>
        <select id="mtype" disabled><option>工具</option></select>
        <div class="treebox">
          <ul class="mtree">
            <li class="mroot"><b>−</b><svg viewBox="0 0 14 18"><path d="M3 1v5l4 3 4-3V1M7 8v9" fill="none" stroke="#a9b4bf" stroke-width="3"/></svg><span>平口手抓工具</span></li>
            <li><svg><use href="#no"/></svg><span>链接</span></li>
            <li><svg><use href="#no"/></svg><span>接点</span></li>
            <li><svg><use href="#no"/></svg><span>工具数据</span></li>
            <li><svg><use href="#ok"/></svg><span>校准</span></li>
            <li><svg><use href="#ok"/></svg><span>依赖性</span></li>
          </ul>
        </div>
        <div class="mbtns"><button type="button" disabled>编译机械装置</button><button type="button" disabled>关闭</button></div>
      </form>
    </section>

    <section class="panel docs">
      <div class="phead">
        <button class="ptab on">文档</button>
        <span class="pctl"><svg width="8" height="10"><use href="#pin"/></svg><button aria-label="关闭">x</button></span>
      </div>
      <div class="radios">
        <label><input type="radio" name="src">工作站</label>
        <label><input type="radio" name="src" checked>搜索</label>
        <label><input type="radio" name="src">浏览</label>
        <a href="#">位置<span class="mono">...</span></a>
      </div>
      <div class="searchrow">
        <input class="search" type="text" placeholder="搜索" aria-label="搜索">
        <button aria-label="查找"><svg width="16" height="16" viewBox="0 0 16 16" fill="none" stroke="#2d5f9c" stroke-width="2"><circle cx="10" cy="6" r="4"/><path d="M7 9l-6 6"/></svg></button>
        <button aria-label="展开"><svg width="12" height="12" viewBox="0 0 12 12" fill="none" stroke="#111" stroke-width="2"><path d="M1 1l5 4 5-4M1 6l5 4 5-4"/></svg></button>
      </div>
      <div class="results"></div>
    </section>

    <section class="panel output">
      <div class="phead">
        <button class="ptab on">输出</button>
        <span class="pctl"><svg width="8" height="10"><use href="#pin"/></svg><button aria-label="关闭">x</button></span>
      </div>
      <div class="outbody">
        <table>
          <thead>
            <tr><th><label for="from">信息来自:</label><select id="from"><option>全部信息</option></select></th><th>时间</th><th>种类</th><th></th></tr>
          </thead>
          <tbody>
            <tr><td><div><svg><use href="#info"/></svg>本地原点已更改</div></td><td class="mono">2022/10/23 9:34:10</td><td>概述</td><td></td></tr>
            <tr><td><div><svg><use href="#info"/></svg>对象已定位</div></td><td class="mono">2022/10/23 9:37:34</td><td>概述</td><td></td></tr>
            <tr><td><div><svg><use href="#info"/></svg>自动保存完成。</div></td><td class="mono">2022/10/23 9:40:22</td><td>概述</td><td></td></tr>
            <tr><td><div><svg><use href="#info"/></svg>保存工作站<span class="mono"> Solution1 </span>成功。</div></td><td class="mono">2022/10/23 9:42:34</td><td>概述</td><td></td></tr>
            <tr><td><div><svg><use href="#info"/></svg><span class="mono">IRB_120_3kg_0.58m (</span>工作站<span class="mono">): 10230 - </span>备份步骤就绪</div></td><td class="mono">2022/10/23 9:42:34</td><td>事件日志</td><td></td></tr>
            <tr><td><div><svg><use href="#info"/></svg><span class="mono">IRB_120_3kg_0.58m (</span>工作站<span class="mono">): 10231 - </span>备份步骤就绪</div></td><td class="mono">2022/10/23 9:42:34</td><td>事件日志</td><td></td></tr>
            <tr><td><div><svg><use href="#info"/></svg><span class="mono">IRB_120_3kg_0.58m (</span>工作站<span class="mono">): 10232 - </span>备份步骤就绪</div></td><td class="mono">2022/10/23 9:42:34</td><td>事件日志</td><td></td></tr>
            <tr><td><div><svg><use href="#info"/></svg><span class="mono">IRB_120_3kg_0.58m (</span>工作站<span class="mono">): 10233 - </span>备份步骤就绪</div></td><td class="mono">2022/10/23 9:42:34</td><td>事件日志</td><td></td></tr>
          </tbody>
        </table>
        <div class="scroll">
          <svg width="10" height="8" viewBox="0 0 10 8"><path d="M1 6l4-4 4 4" fill="none" stroke="#444" stroke-width="2"/></svg>
          <i></i>
          <svg width="10" height="8" viewBox="0 0 10 8"><path d="M1 2l4 4 4-4" fill="none" stroke="#444" stroke-width="2"/></svg>
        </div>
      </div>
    </section>

    <form class="dialog" aria-label="创建 链接">
      <h2>创建 链接</h2>
      <div class="dbody">
        <div class="dtop">
          <div class="dleft">
            <label class="first" for="lname">链接名称</label>
            <input id="lname" type="text" value="L1">
            <label for="lcomp">所选组件：</label>
            <select id="lcomp"><option>&lt;选择组件&gt;</option></select>
            <label class="check"><input type="checkbox"><span>设置为<span class="mono"> BaseLink</span></span></label>
          </div>
          <button class="add" type="button" aria-label="添加"><i></i></button>
          <div class="dright">
            <div class="added"><span>已添加的主页</span><i></i><i></i><i></i><i></i><i></i></div>
            <button type="button" disabled>移除组件</button>
          </div>
        </div>
        <fieldset disabled>
          <legend>所选组件</legend>
          <div class="coords">
            <p>部件位置<span class="mono"> (mm)</span></p>
            <div class="xyz">
              <input class="x" value="0.00" aria-label="位置 X"><span class="spin"><i></i><i></i></span>
              <input class="y" value="0.00" aria-label="位置 Y"><span class="spin"><i></i><i></i></span>
              <input class="z" value="0.00" aria-label="位置 Z"><span class="spin"><i></i><i></i></span>
            </div>
            <p>部件朝向<span class="mono"> (deg)</span><svg class="dd" width="15" height="11"><path d="M0 0h15v11H0z" fill="#c6c6c6"/><path d="M3 3h9l-4 5z" fill="#666"/></svg></p>
            <div class="xyz">
              <input class="x" value="0.00" aria-label="朝向 X"><span class="spin"><i></i><i></i></span>
              <input class="y" value="0.00" aria-label="朝向 Y"><span class="spin"><i></i><i></i></span>
              <input class="z" value="0.00" aria-label="朝向 Z"><span class="spin"><i></i><i></i></span>
            </div>
          </div>
          <button type="button">应用到组件</button>
        </fieldset>
        <div class="dbtns">
          <button type="button" disabled>确定</button>
          <button type="button" class="cancel">取消</button>
          <button type="button" disabled>应用</button>
        </div>
      </div>
    </form>

    <!-- 操作提示 -->
    <div class="note">
      <svg width="162" height="134" viewBox="0 0 162 134"><path d="M4 132L142 15L137 11L160 1L154 27L149 22L6 133Z" fill="#ff3a3a"/></svg>
      <span>双击链接</span>
    </div>
    <div class="mark"><b>知乎</b> @IT苏苏</div>
  </main>

  <footer class="status">
    <div class="cell"><button>选择方式</button><i class="tri dark"></i><button>捕捉模式</button><i class="tri dark"></i></div>
    <div class="cell ucs">UCS：工作站</div>
    <div class="cell pos"><input class="mono" type="text" value="46.13  -38.79  0.00" aria-label="坐标"></div>
    <div class="cell ctl"><span>控制器状态： 1/1</span></div>
  </footer>
</body>
</html>
```

FILE: styles.css
```css
* {
  box-sizing: border-box;
}

html,
body {
  height: 100%;
}

body {
  margin: 0;
  display: flex;
  flex-direction: column;
  background: #fff;
  color: #000;
  font-family: 'Open Sans', 'Noto Sans CJK SC', sans-serif;
  font-size: 14px;
  line-height: 20px;
  overflow: hidden;
}

button,
input,
select {
  font: inherit;
  color: inherit;
  margin: 0;
  padding: 0;
  border: 0;
  border-radius: 0;
  background: none;
}

select {
  appearance: none;
}

p,
h1,
h2,
ul {
  margin: 0;
  padding: 0;
  font-weight: normal;
  list-style: none;
}

.defs {
  position: absolute;
  width: 0;
  height: 0;
}

.mono {
  font-family: 'Liberation Mono', monospace;
  font-size: 13px;
  white-space: pre;
}

.tri {
  border: 3px solid transparent;
  border-top: 4px solid #8a94a4;
  border-bottom: 0;
}

.tri.dark {
  border-top-color: #2c3a55;
}

/* title bar */
.titlebar {
  display: grid;
  grid-template-columns: 1fr auto 1fr;
  align-items: center;
  height: 28px;
  padding: 0 24px 0 3px;
}

.titlebar h1 {
  padding-left: 40px;
  font-size: 16px;
  line-height: 24px;
  height: 28px;
}

.quick {
  display: flex;
  align-items: center;
  gap: 9px;
  height: 24px;
}

.quick button,
.quick svg {
  display: block;
}

.quick .tri {
  margin-right: -2px;
}

.more {
  margin-left: 6px;
}

.winbtns {
  display: flex;
  justify-content: flex-end;
  gap: 44px;
  padding-top: 7px;
}

.winbtns svg {
  display: block;
}

/* ribbon tabs */
.tabs {
  display: flex;
  height: 28px;
  border-bottom: 1px solid #8e9bac;
  padding-top: 1px;
  flex: none;
}

.tab {
  padding: 0 12px;
  font-size: 16px;
  color: #1f2f4c;
  height: 27px;
}

.tab small {
  font-size: 12px;
}

.tab.latin {
  font-size: 12px;
  padding: 0 17px 0 14px;
}

.tab.file {
  width: 75px;
  margin-right: 2px;
  padding: 0 6px;
  background: linear-gradient(#e8682c, #dd5a1e 50%, #f08a50);
  border: 1px solid #c04c14;
  color: #fff;
  white-space: nowrap;
}

.tab.active {
  width: 55px;
  height: 28px;
  padding: 0;
  background: #f2f6fc;
  border: 1px solid #8e9bac;
  border-bottom: 0;
}

.help {
  margin-left: auto;
  display: flex;
  align-items: center;
  gap: 11px;
  padding-right: 5px;
}

.help button {
  width: 16px;
  height: 16px;
  border-radius: 8px;
  background: #3f74c2;
  color: #fff;
  font-size: 12px;
  font-weight: bold;
  line-height: 16px;
}

/* ribbon */
.ribbon {
  display: flex;
  flex: none;
  height: 96px;
  background: linear-gradient(#f1f5fc, #e4edf7 50%, #d6e4f2);
  border-bottom: 1px solid #9fb6d3;
  color: #1e395b;
}

.rgroup {
  display: flex;
  flex-direction: column;
  border-right: 1px solid #aebfd6;
  padding: 8px 4px 0 5px;
}

.rgroup > p {
  margin-top: auto;
  text-align: center;
  color: #3f5878;
  height: 19px;
  line-height: 16px;
}

.tools {
  display: flex;
  align-items: flex-start;
  height: 66px;
}

.big {
  position: relative;
  display: flex;
  flex-direction: column;
  align-items: center;
  gap: 5px;
  min-width: 44px;
  padding: 0 3px;
  white-space: nowrap;
}

.big > svg {
  width: 30px;
  height: 30px;
}

.big.drop::after {
  content: '';
  position: absolute;
  bottom: -4px;
  border: 3px solid transparent;
  border-top-color: #6b7a90;
  border-bottom: 0;
}

.big.off {
  color: #8e99a8;
}

.sep {
  width: 1px;
  height: 52px;
  margin: 6px 3px 0;
  background: #b4c3d6;
}

.smalls {
  display: flex;
  flex-direction: column;
  padding-left: 4px;
}

.smalls button {
  display: flex;
  align-items: center;
  gap: 3px;
  height: 22px;
  white-space: nowrap;
}

.smalls svg {
  width: 16px;
  height: 16px;
}

.freehand {
  position: relative;
  width: 153px;
}

.freehand select {
  width: 100%;
  height: 21px;
  margin-top: 6px;
  padding-left: 3px;
  border: 1px solid #8fa9c8;
  background: #edf3fa;
}

.freehand::after {
  content: '';
  position: absolute;
  right: 5px;
  top: 15px;
  border: 3px solid transparent;
  border-top: 4px solid #6b7a90;
  border-bottom: 0;
}

.jogs {
  display: flex;
  align-items: center;
  gap: 4px;
  height: 20px;
  margin-top: 11px;
  padding-left: 2px;
}

.jogs button,
.jogs svg {
  display: block;
  width: 16px;
  height: 16px;
}

/* docked panels */
.workspace {
  flex: 1;
  min-height: 0;
  position: relative;
  display: grid;
  grid-template-columns: 311px minmax(0, 1fr) 313px 313px;
  grid-template-rows: minmax(0, 1fr) 220px;
  gap: 5px;
  padding-top: 2px;
  background: #b9d5f5;
}

.panel {
  display: flex;
  flex-direction: column;
  min-height: 0;
  border: 1px solid #5a84b8;
  background: #d6e4f3;
}

.left {
  grid-row: 1 / 3;
  border-left: 0;
  background: #fff;
}

.output {
  grid-column: 2 / 5;
  background: #fff;
}

.phead {
  display: flex;
  align-items: flex-end;
  flex: none;
  height: 25px;
  padding-left: 1px;
  background: #c5d8ee;
  border-bottom: 1px solid #5a84b8;
}

.ptab {
  height: 22px;
  padding: 0 8px;
  margin-right: -1px;
  border: 1px solid #5a84b8;
  border-bottom: 0;
  color: #1f3557;
  line-height: 20px;
  background: #c0d4ec;
}

.ptab.on {
  font-weight: bold;
  background: #cfdff2;
}

.ptab.light {
  background: #eaf2fc;
}

.ptab b {
  font-weight: normal;
  color: #000;
  margin-left: 3px;
}

.pctl {
  margin-left: auto;
  display: flex;
  align-items: center;
  align-self: center;
  gap: 9px;
  padding-right: 6px;
}

.pctl button {
  color: #000;
  font-size: 15px;
  line-height: 16px;
}

.tree {
  padding-top: 2px;
  font-size: 15px;
}

.tree li {
  display: flex;
  align-items: center;
  height: 24px;
  padding-left: 10px;
  white-space: nowrap;
}

.tree li svg {
  width: 20px;
  height: 18px;
  margin: 0 5px 0 8px;
}

.tree li i {
  border: 5px solid transparent;
  border-left: 6px solid #b4b4b4;
  border-right: 0;
}

.tree .root svg {
  width: 18px;
  height: 22px;
  margin: 0 7px 0 -5px;
}

.tree .cat {
  height: 20px;
  padding-left: 23px;
  color: #808080;
  text-decoration: underline;
}

/* 3D view */
.canvas {
  position: relative;
  flex: 1;
  min-height: 0;
  background: linear-gradient(#e3f0fd, #dce7f3 50%, #d2dbe4);
}

.scene {
  position: absolute;
  width: 100%;
  height: 100%;
}

.axis {
  font-size: 15px;
}

.vbar {
  position: absolute;
  top: 22px;
  left: 22px;
  display: flex;
  gap: 19px;
}

.vbar.second {
  top: 55px;
}

.vbar div {
  display: flex;
  gap: 9px;
}

.vbar button {
  width: 24px;
  height: 24px;
  opacity: 0.22;
}

.vbar svg {
  display: block;
  width: 24px;
  height: 24px;
}

.vbar .hot {
  opacity: 1;
  background: #f6ab62;
}

/* create mechanism */
.mechform {
  flex: 1;
  min-height: 0;
  display: flex;
  flex-direction: column;
  padding: 10px 16px 14px 18px;
  font-size: 15px;
}

.mechform label {
  height: 24px;
  line-height: 24px;
  color: #1c4f86;
}

.mechform input,
.mechform select {
  width: 206px;
  height: 24px;
  padding-left: 3px;
  border: 1px solid #c8cfd8;
  background: #f0f0f0;
  color: #6d6d6d;
  opacity: 1;
}

.mechform input {
  margin-bottom: 10px;
  border-color: #fff;
}

.mechform select {
  height: 23px;
  border-color: #bbb;
  background: #ccc;
}

.treebox {
  flex: 1;
  min-height: 0;
  margin-top: 19px;
  padding: 8px 0 5px 9px;
  border: 2px solid #55626f;
  border-right-width: 1px;
}

.mtree {
  height: 100%;
  background: #fff;
  border: 1px solid #7a8896;
  border-right: 0;
}

.mtree li {
  position: relative;
  display: flex;
  align-items: center;
  height: 26px;
  padding-left: 41px;
}

.mtree li svg {
  width: 16px;
  height: 16px;
  margin-right: 4px;
}

.mtree li::before {
  content: '';
  position: absolute;
  left: 31px;
  top: 0;
  width: 10px;
  height: 13px;
  border: 1px dotted #888;
  border-top: 0;
  border-right: 0;
}

.mtree li + li::before {
  top: -13px;
  height: 26px;
}

.mtree .mroot {
  padding-left: 7px;
}

.mtree .mroot::before {
  display: none;
}

.mtree b {
  width: 11px;
  height: 11px;
  margin-right: 5px;
  border: 1px solid #999;
  font-size: 12px;
  font-weight: normal;
  line-height: 8px;
  text-align: center;
}

.mtree span {
  height: 26px;
  padding: 0 2px;
  background: #f0f0f0;
  color: #666;
  line-height: 24px;
}

.mbtns {
  display: grid;
  grid-template-columns: 155px 1fr;
  gap: 10px;
  margin: 19px 0 0 10px;
}

.mbtns button {
  height: 27px;
  border: 1px solid #bfbfbf;
  background: #ccc;
  color: #1c4f86;
}

/* documents */
.docs {
  border-right: 0;
}

.radios {
  display: flex;
  align-items: center;
  gap: 12px;
  height: 27px;
  padding: 0 7px;
  font-size: 15px;
}

.radios label {
  display: flex;
  align-items: center;
  gap: 6px;
}

.radios input {
  width: 16px;
  height: 16px;
  accent-color: #333;
}

.radios a {
  color: #00e;
}

.searchrow {
  display: flex;
  align-items: center;
  gap: 13px;
  padding: 0 10px 0 4px;
  height: 28px;
}

.search {
  flex: 1;
  min-width: 0;
  height: 25px;
  padding-left: 3px;
  border: 1px solid #7a7a7a;
  background: #fff;
  font-style: italic;
}

.results {
  flex: 1;
  margin: 2px 0 18px;
  background: #fff;
  border: 1px solid #828a94;
}

/* output */
.outbody {
  flex: 1;
  display: flex;
  min-height: 0;
  padding-top: 3px;
}

.outbody table {
  flex: 1;
  border-collapse: collapse;
  table-layout: fixed;
  font-size: 15px;
  height: max-content;
}

.outbody th {
  position: relative;
  height: 24px;
  padding: 0 6px;
  border-right: 1px solid #e2e2e2;
  font-weight: normal;
  text-align: left;
  line-height: 22px;
}

.outbody th:nth-child(1) {
  width: 766px;
}

.outbody th:nth-child(2),
.outbody th:nth-child(3) {
  width: 181px;
}

.outbody th:last-child {
  border: 0;
}

.outbody td {
  height: 19px;
  padding: 0 6px;
  line-height: 18px;
  white-space: nowrap;
}

.outbody .mono {
  white-space: pre;
}

.outbody td:first-child {
  padding-left: 4px;
}

.outbody td div {
  display: flex;
  align-items: center;
  height: 19px;
}

.outbody td svg {
  width: 14px;
  height: 14px;
  margin-right: 3px;
}

.outbody select {
  width: 174px;
  height: 22px;
  margin-left: 4px;
  padding-left: 3px;
  background: #f0f0f0;
}

.outbody th:first-child::after {
  content: '';
  position: absolute;
  left: 235px;
  top: 10px;
  border: 3px solid transparent;
  border-top: 4px solid #000;
  border-bottom: 0;
}

.scroll {
  width: 19px;
  display: flex;
  flex-direction: column;
  align-items: center;
  gap: 7px;
  padding: 8px 0;
  background: #f0f0f0;
}

.scroll i {
  width: 19px;
  height: 21px;
  margin-top: auto;
  background: #cdcdcd;
}

/* create link dialog */
.dialog {
  position: absolute;
  left: 208px;
  top: 185px;
  width: 527px;
  background: #f0f0f0;
  border: 1px solid #8f8f8f;
  box-shadow: 2px 4px 12px rgba(0, 0, 0, 0.35);
  font-size: 15px;
}

.dialog h2 {
  height: 37px;
  padding-left: 9px;
  background: #fff;
  color: #999;
  font-size: 15px;
  line-height: 37px;
}

.dbody {
  padding: 15px 15px 15px 9px;
}

.dtop {
  display: flex;
  align-items: flex-start;
  gap: 30px;
}

.dleft {
  display: flex;
  flex-direction: column;
  width: 205px;
}

.dleft label {
  height: 29px;
  line-height: 34px;
}

.dleft .first {
  height: 22px;
  line-height: 18px;
  padding-left: 5px;
}

.dleft > input {
  height: 25px;
  padding-left: 2px;
  border: 1px solid #7a7a7a;
  background: #fff;
  font-family: 'Liberation Mono', monospace;
  font-size: 13px;
}

.dleft select {
  height: 23px;
  padding-left: 3px;
  border: 1px solid #adadad;
  background: #e1e1e1;
}

.dleft select,
.mechform select,
.search {
  background-image: linear-gradient(45deg, transparent 50%, #777 50%, #777 62%, transparent 62%), linear-gradient(-45deg, transparent 50%, #777 50%, #777 62%, transparent 62%);
  background-repeat: no-repeat;
  background-size: 6px 6px;
  background-position: right 11px center, right 6px center;
}

.dleft .check {
  display: flex;
  align-items: center;
  gap: 6px;
  height: 20px;
  margin-top: 39px;
  line-height: 20px;
}

.check input {
  appearance: none;
  width: 16px;
  height: 16px;
  border: 1px solid #333;
  background: #fff;
}

.dialog button {
  border: 1px solid #bfbfbf;
  background: #ccc;
  color: #8c8c8c;
}

.dialog .add {
  display: flex;
  align-items: center;
  justify-content: center;
  width: 38px;
  height: 138px;
}

.add i {
  border: 8px solid transparent;
  border-left: 8px solid #808080;
  border-right: 0;
}

.dright {
  width: 193px;
}

.added {
  height: 138px;
  margin-bottom: 14px;
  padding: 2px;
  border: 1px solid #828790;
  background: linear-gradient(90deg, transparent 141px, #e5e5e5 141px, #e5e5e5 142px, transparent 142px) #fff;
}

.added span {
  display: block;
  height: 23px;
  padding-left: 6px;
}

.added i {
  display: block;
  height: 19px;
  border-bottom: 1px solid #ececec;
}

.dright button {
  width: 100%;
  height: 23px;
}

.dialog fieldset {
  display: flex;
  gap: 10px;
  margin: 18px 0 0 6px;
  padding: 0 7px 17px 8px;
  border: 1px solid #dcdcdc;
  color: #8a8a8a;
  min-width: 0;
}

.dialog legend {
  padding: 0 2px;
  height: 20px;
}

.coords {
  width: 355px;
}

.coords p {
  display: flex;
  align-items: flex-end;
  height: 22px;
  padding-left: 3px;
}

.coords .xyz + p {
  height: 23px;
}

.dd {
  margin: 0 0 6px auto;
}

.xyz {
  display: flex;
  gap: 2px;
}

.xyz input {
  flex: 1;
  min-width: 0;
  height: 24px;
  padding-left: 3px;
  border: 1px solid #a0a0a0;
  border-right-color: #eee;
  font-family: 'Liberation Mono', monospace;
  font-size: 13px;
  color: #707070;
}

.xyz .x {
  background: #ffcccc;
}

.xyz .y {
  background: #ccffcc;
}

.xyz .z {
  background: #ccccff;
}

.spin {
  display: flex;
  flex-direction: column;
  justify-content: space-between;
  align-items: center;
  width: 12px;
  padding: 4px 0;
}

.spin i {
  border: 4px solid transparent;
  border-bottom-color: #555;
  border-top: 0;
}

.spin i + i {
  border-top: 4px solid #555;
  border-bottom: 0;
}

.dialog fieldset button {
  flex: 1;
  height: 69px;
  margin-top: 22px;
}

.dbtns {
  display: flex;
  justify-content: flex-end;
  gap: 17px;
  margin-top: 32px;
  padding-right: 2px;
}

.dbtns button {
  width: 115px;
  height: 29px;
}

.dialog .cancel {
  background: #e1e1e1;
  border-color: #adadad;
  color: #000;
}

/* annotation over the panels */
.note {
  position: absolute;
  top: 217px;
  right: 546px;
  width: 216px;
  color: #ff3a3a;
  font-size: 23px;
  line-height: 26px;
}

.note svg {
  display: block;
  margin-left: 54px;
}

.mark {
  position: absolute;
  right: 62px;
  bottom: 34px;
  color: #fff;
  font-size: 71px;
  line-height: 88px;
  font-family: 'Open Sans', 'Noto Sans CJK SC', sans-serif;
  text-shadow: 3px 3px 0 #b0b0b0;
}

.mark b {
  font-size: 76px;
}

/* status bar */
.status {
  display: flex;
  flex: none;
  justify-content: flex-end;
  height: 26px;
  border-bottom: 1px solid #000;
  background: linear-gradient(#dbe7f4, #b4c6da);
  color: #1f3557;
}

.cell {
  display: flex;
  align-items: center;
  gap: 7px;
  padding: 0 8px;
  border-left: 1px solid #8ba4c2;
}

.cell.ucs {
  padding: 0 4px;
}

.cell.pos {
  padding: 0 3px;
}

.pos input {
  width: 219px;
  height: 22px;
  padding-left: 3px;
  border: 1px solid #8fa9c8;
  background: #f3f8fd;
  color: #000;
}

.cell.ctl {
  padding: 0 3px 0 2px;
}

.ctl span {
  width: 118px;
  padding: 0 5px;
  background: #3cb371;
  color: #10301c;
  line-height: 22px;
  white-space: nowrap;
}
```
